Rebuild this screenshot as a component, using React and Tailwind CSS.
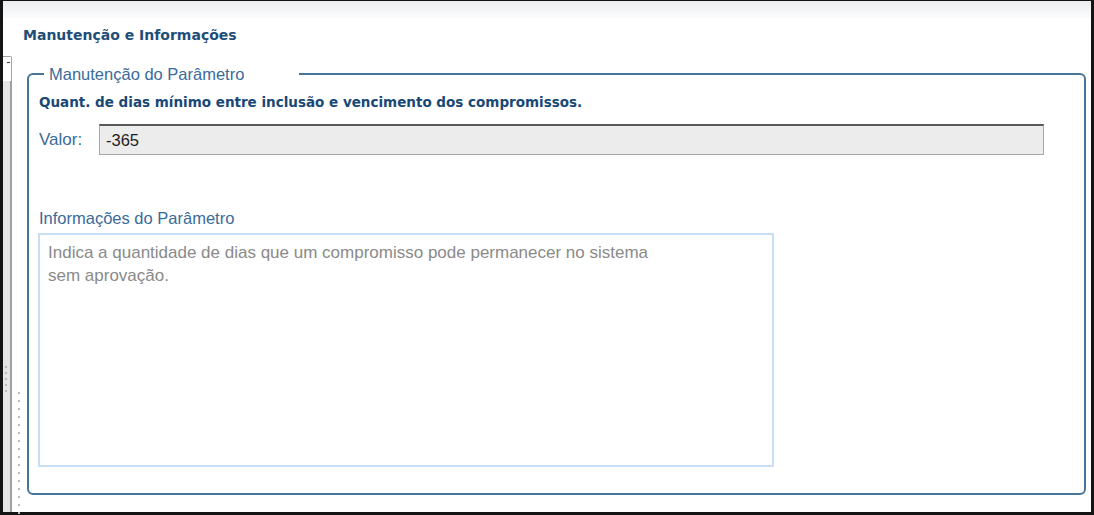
import React from 'react';

const Dots = ({ count, gap }) => (
  <div className={`flex flex-col ${gap}`}>
    {[...Array(count)].map((_, i) => (
      <div key={i} className="w-[2px] h-[2px] bg-[#b9b9b9]"></div>
    ))}
  </div>
);

const App = () => {
  return (
    <div className="w-[1094px] h-[515px] bg-[#141414] pl-[3px] pr-[3px] pt-[1px] pb-[3px] overflow-hidden">
      <div className="w-full h-full bg-white flex flex-col">
        {/* header gradient band */}
        <div className="h-[17px] shrink-0 bg-gradient-to-b from-[#eceef0] to-[#fbfcfd]"></div>

        <div className="flex flex-1 min-h-0">
          {/* collapsed side panel */}
          <div className="w-[9px] shrink-0 flex flex-col pt-[38px]">
            <div className="h-[25px] border-t border-r border-[#a3a3a3] rounded-tr-[2px] relative">
              <div className="absolute right-[1px] top-[5px] w-[3px] h-[1px] bg-[#333]"></div>
            </div>
            <div className="flex-1 bg-[#e6e6e6] border-r-2 border-[#a0a0a0] flex flex-col items-start pl-[2px] pt-[285px]">
              <Dots count={5} gap="gap-[4px]" />
            </div>
          </div>

          {/* main content */}
          <div className="flex-1 relative font-['Liberation_Sans',Arial,sans-serif]">
            <div className="absolute left-[6px] top-[374px] bottom-0">
              <Dots count={16} gap="gap-[6px]" />
            </div>

            <h1 className="pl-[11px] pt-[9px] text-[14px] leading-[17px] font-bold text-[#1e4d78] font-['DejaVu_Sans',Verdana,sans-serif]">
              Manutenção e Informações
            </h1>

            <fieldset className="ml-[15px] mr-[5px] mt-[20px] border-2 border-[#46759a] rounded-[6px] px-[10px] pb-[26px] pt-[10px]">
              <legend className="ml-[5px] pl-[5px] pr-[55px] text-[16.5px] leading-[20px] text-[#3a6b99]">
                Manutenção do Parâmetro
              </legend>

              <p className="text-[13.5px] leading-[17px] font-bold text-[#174876] font-['DejaVu_Sans',Verdana,sans-serif]">
                Quant. de dias mínimo entre inclusão e vencimento dos compromissos.
              </p>

              <div className="flex items-center mt-[13px] pr-[30px]">
                <label className="w-[60px] shrink-0 text-[17px] text-[#3a6b99]">Valor:</label>
                <input
                  readOnly
                  value="-365"
                  className="flex-1 h-[31px] bg-[#ececec] border border-[#a8a8a8] border-t-2 border-t-[#5a5a5a] px-[6px] text-[16.5px] text-[#1e1e1e] outline-none"
                />
              </div>

              <div className="mt-[53px] text-[16.5px] leading-[20px] text-[#3a6b99]">
                Informações do Parâmetro
              </div>
              <div className="mt-[5px] -ml-[1px] w-[736px] h-[234px] border-2 border-[#c8def5] px-[8px] py-[6px] text-[17px] leading-[23px] text-[#8a8a8a]">
                Indica a quantidade de dias que um compromisso pode permanecer no sistema
                <br />
                sem aprovação.
              </div>
            </fieldset>
          </div>
        </div>
      </div>
    </div>
  );
};

export default App;
